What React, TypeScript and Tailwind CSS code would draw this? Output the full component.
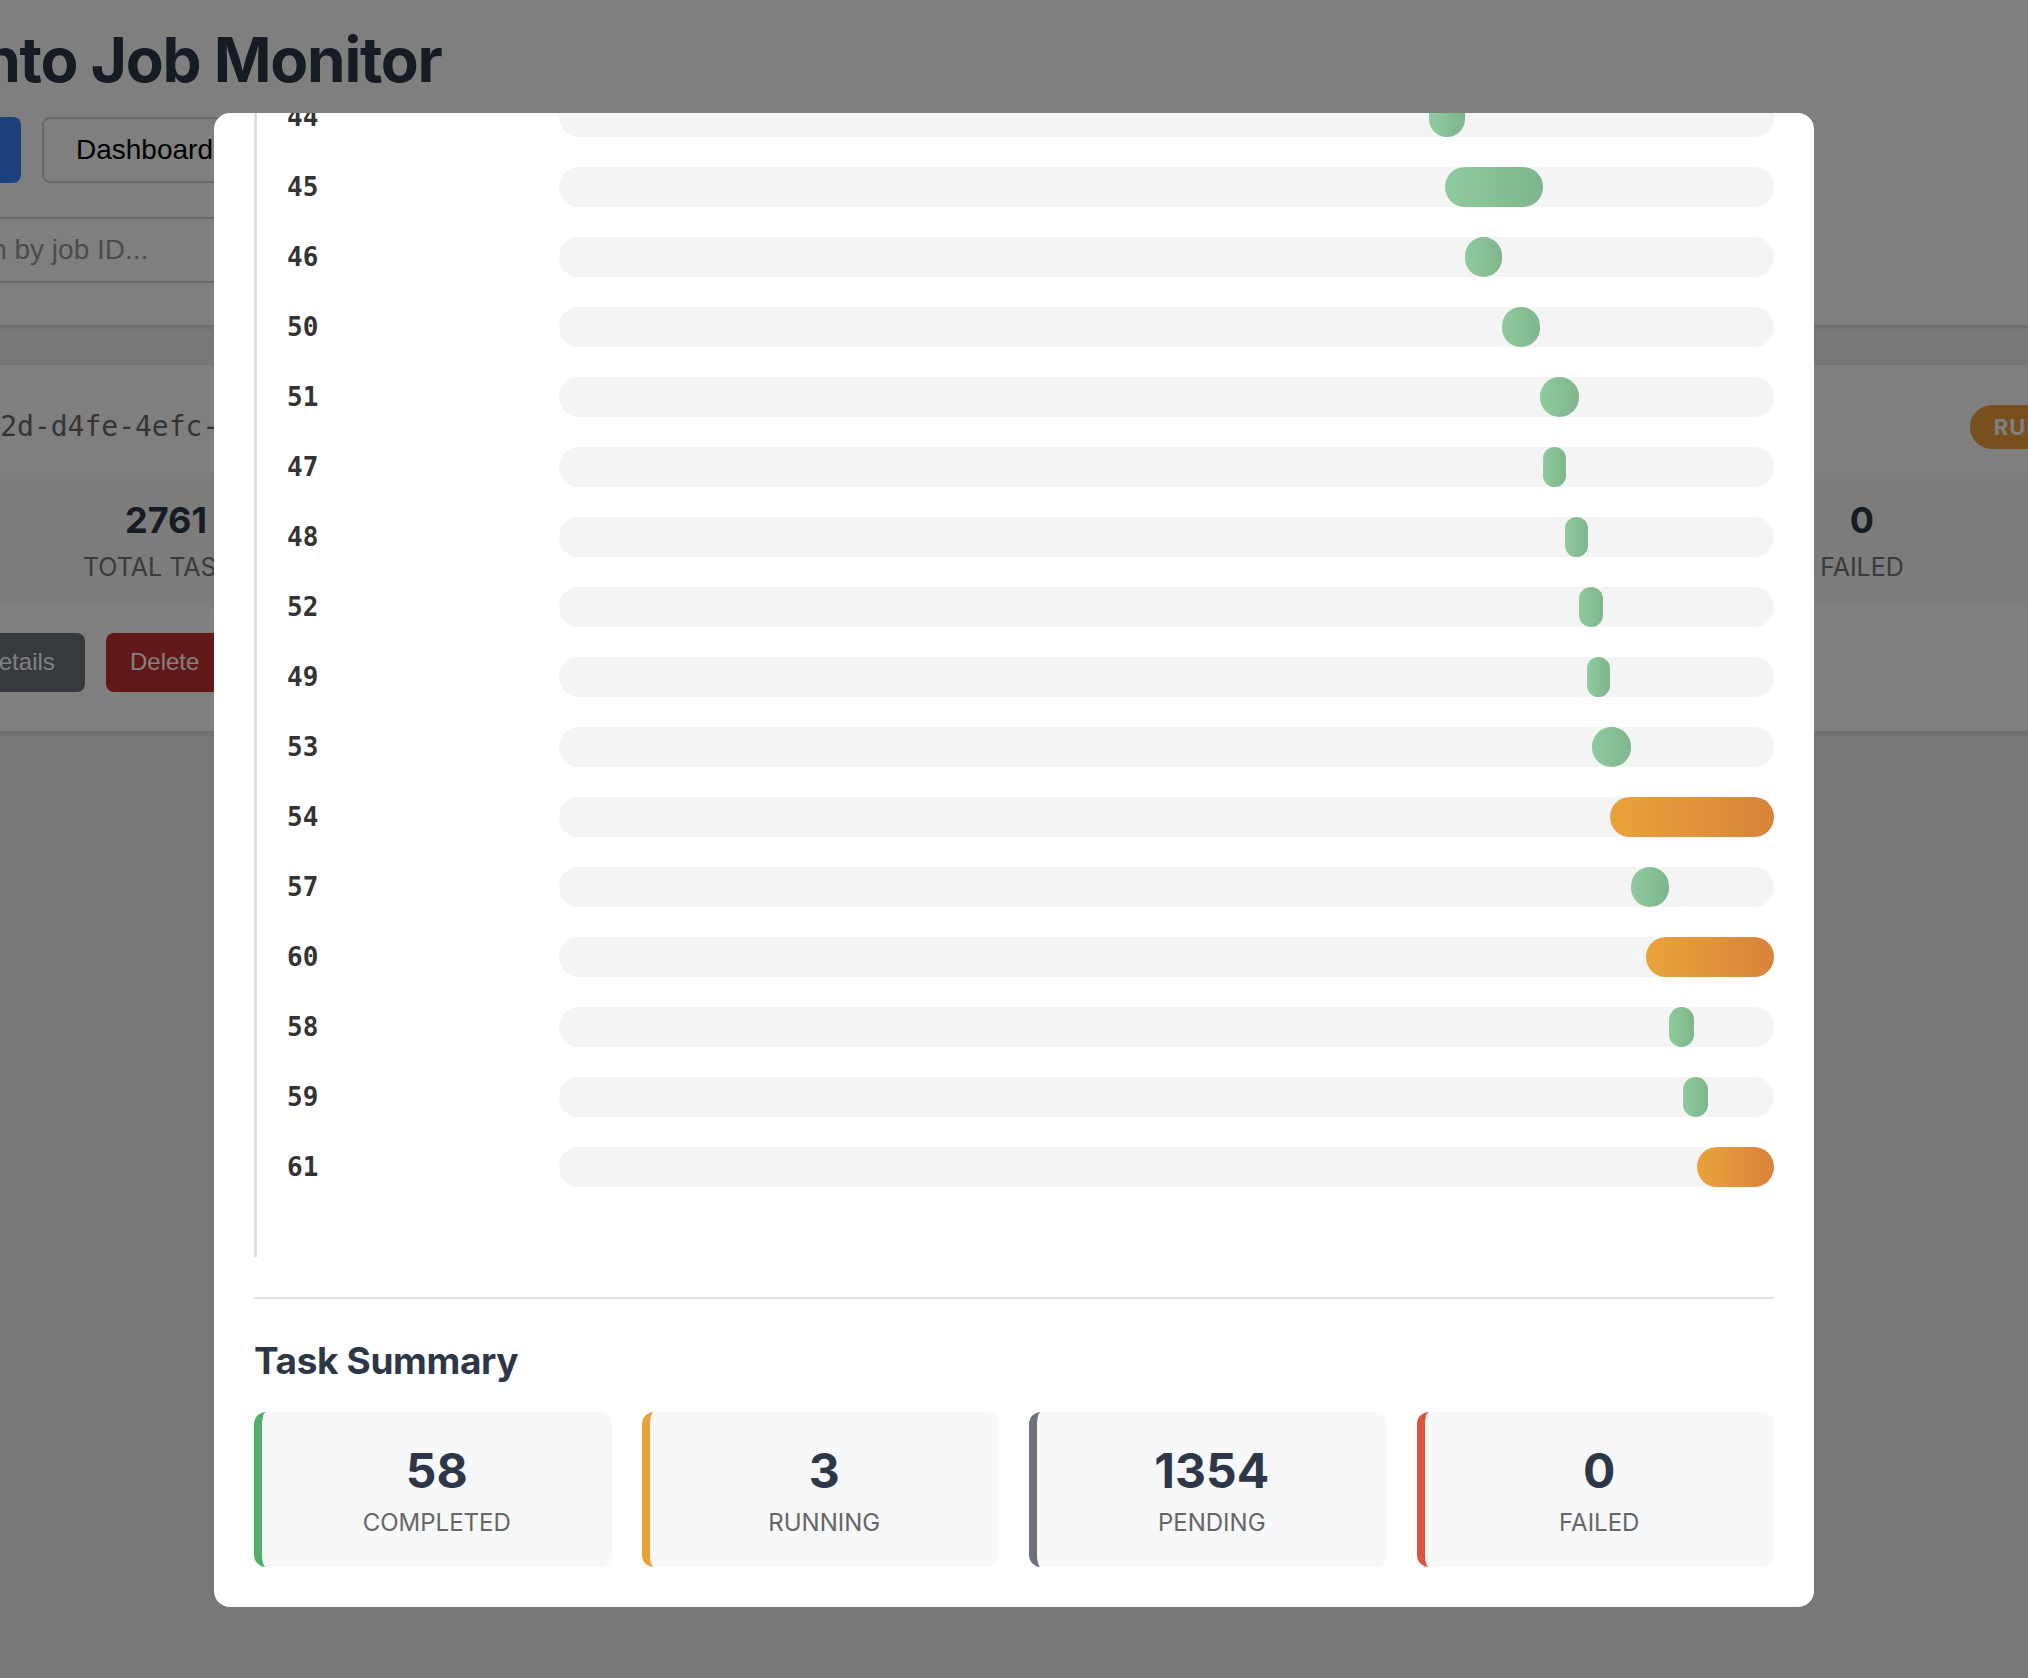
import React from 'react';

type TaskBar = { id: number; start: number; length: number; status: 'completed' | 'running' };

// timeline span in px-equivalent units, bars are positioned as a share of it
const SPAN = 1215;

const timeline: TaskBar[] = [
  { id: 41, start: 812, length: 38, status: 'completed' },
  { id: 42, start: 830, length: 36, status: 'completed' },
  { id: 43, start: 851, length: 37, status: 'completed' },
  { id: 44, start: 870, length: 36, status: 'completed' },
  { id: 45, start: 886, length: 98, status: 'completed' },
  { id: 46, start: 906, length: 37, status: 'completed' },
  { id: 50, start: 943, length: 38, status: 'completed' },
  { id: 51, start: 981, length: 39, status: 'completed' },
  { id: 47, start: 984, length: 23, status: 'completed' },
  { id: 48, start: 1006, length: 23, status: 'completed' },
  { id: 52, start: 1020, length: 24, status: 'completed' },
  { id: 49, start: 1028, length: 23, status: 'completed' },
  { id: 53, start: 1033, length: 39, status: 'completed' },
  { id: 54, start: 1051, length: 164, status: 'running' },
  { id: 57, start: 1072, length: 38, status: 'completed' },
  { id: 60, start: 1087, length: 128, status: 'running' },
  { id: 58, start: 1110, length: 25, status: 'completed' },
  { id: 59, start: 1124, length: 25, status: 'completed' },
  { id: 61, start: 1138, length: 77, status: 'running' },
];

const summary = [
  { label: 'Completed', value: 58, border: 'border-[#52ad6a]' },
  { label: 'Running', value: 3, border: 'border-[#e9a13c]' },
  { label: 'Pending', value: 1354, border: 'border-[#6c737d]' },
  { label: 'Failed', value: 0, border: 'border-[#dc5441]' },
];

const jobStats = [
  { label: 'Total Tasks', value: 2761 },
  { label: 'Completed', value: 58 },
  { label: 'Running', value: 3 },
  { label: 'Pending', value: 1354 },
  { label: 'Failed', value: 0 },
];

const TimelineRow = ({ task }: { task: TaskBar }) => (
  <div className="mb-[30px] flex h-10 items-center">
    <span className="w-[272px] shrink-0 font-['DejaVu_Sans_Mono',monospace] text-[26px] font-bold text-[#333]">
      {task.id}
    </span>
    <div className="relative h-10 flex-1 rounded-full bg-[#f4f4f4]">
      <div
        className={`absolute top-0 h-10 rounded-full ${
          task.status === 'running'
            ? 'bg-linear-to-r from-[#e9a33b] to-[#d9833a]'
            : 'bg-linear-to-r from-[#8fcb9e] to-[#7fb58c]'
        }`}
        style={{ left: `${(task.start / SPAN) * 100}%`, width: `${(task.length / SPAN) * 100}%` }}
      />
    </div>
  </div>
);

export default function App() {
  return (
    <div className="relative h-[1678px] w-[2028px] overflow-hidden bg-[#f0f0f0] font-['Inter',sans-serif]">
      {/* page behind the modal */}
      <div className="-ml-[156px] w-[2340px]">
        <header className="bg-white px-10 pt-[22px] pb-[42px] shadow-[0_2px_6px_rgba(0,0,0,0.12)]">
          <h1 className="text-[62px] font-bold leading-[1.21] tracking-[-0.02em] text-[#2d3748]">
            Pronto Job Monitor
          </h1>
          <nav className="mt-5 flex gap-[21px] font-['Liberation_Sans',Arial,sans-serif] text-[28px]">
            <button className="h-[66px] w-[137px] rounded-lg bg-[#3b82f6] text-white">Jobs</button>
            <button className="h-[66px] rounded-lg border-2 border-[#d2d2d2] bg-white px-[32px] text-black">
              Dashboard
            </button>
          </nav>
          <input
            className="mt-[34px] block h-[66px] w-[1200px] border-y-2 border-[#d2d2d2] pl-[34px] font-['Liberation_Sans',Arial,sans-serif] text-[28px] placeholder:text-[#999]"
            placeholder="Search by job ID..."
          />
        </header>

        <main className="px-[15px] pt-10">
          <div className="rounded-xl bg-white shadow-[0_2px_6px_rgba(0,0,0,0.12)]">
            <div className="flex items-center justify-between px-10 pt-10 pb-[30px]">
              <span className="font-['DejaVu_Sans_Mono',monospace] text-[28px] text-[#6b6b6b]">
                5a81c92d-d4fe-4efc-9b3e-7c2a1f0e6d48
              </span>
              <span className="flex h-[44px] items-center rounded-full bg-[#f0a03c] px-6 text-[22px] font-bold tracking-[0.05em] text-white">
                RUNNING
              </span>
            </div>
            <div className="grid grid-cols-5 bg-[#f8f9fa] px-[95px] py-5">
              {jobStats.map((s) => (
                <div key={s.label} className="text-center">
                  <div className="text-[36px] font-bold leading-[1.21] text-[#2d3748]">{s.value}</div>
                  <div className="mt-[9px] text-[25px] uppercase leading-[1.21] text-[#777]">{s.label}</div>
                </div>
              ))}
            </div>
            <div className="flex gap-4 px-10 pt-[31px] pb-[39px] font-['Liberation_Sans',Arial,sans-serif] text-[24px] text-white">
              <button className="h-[59px] w-[186px] rounded-lg bg-[#6c757d] pr-[6px]">View Details</button>
              <button className="ml-[5px] h-[59px] rounded-lg bg-[#c53030] px-6">Delete</button>
            </div>
          </div>
        </main>
      </div>

      {/* overlay + modal */}
      <div className="absolute inset-0 flex items-start justify-center bg-black/50 pt-[113px]">
        <div className="flex h-[1494px] w-[1600px] flex-col justify-end overflow-hidden rounded-2xl bg-white px-10 pb-10">
          <div className="shrink-0 border-l-[3px] border-[#dddddd] pb-10 pl-[30px]">
            {timeline.map((task) => (
              <TimelineRow key={task.id} task={task} />
            ))}
          </div>

          <div className="mt-10 shrink-0 border-t-2 border-[#e2e2e2] pt-10">
            <h3 className="mb-[28px] text-[37px] font-bold leading-[1.21] tracking-[-0.01em] text-[#2d3748]">
              Task Summary
            </h3>
            <div className="grid grid-cols-4 gap-[30px]">
              {summary.map((s) => (
                <div key={s.label} className={`rounded-xl border-l-[8px] bg-[#f7f8fa] py-[30px] text-center ${s.border}`}>
                  <div className="text-[48px] font-bold leading-[1.21] text-[#2d3748]">{s.value}</div>
                  <div className="mt-2 text-[24px] uppercase leading-[1.21] text-[#666]">{s.label}</div>
                </div>
              ))}
            </div>
          </div>
        </div>
      </div>
    </div>
  );
}
